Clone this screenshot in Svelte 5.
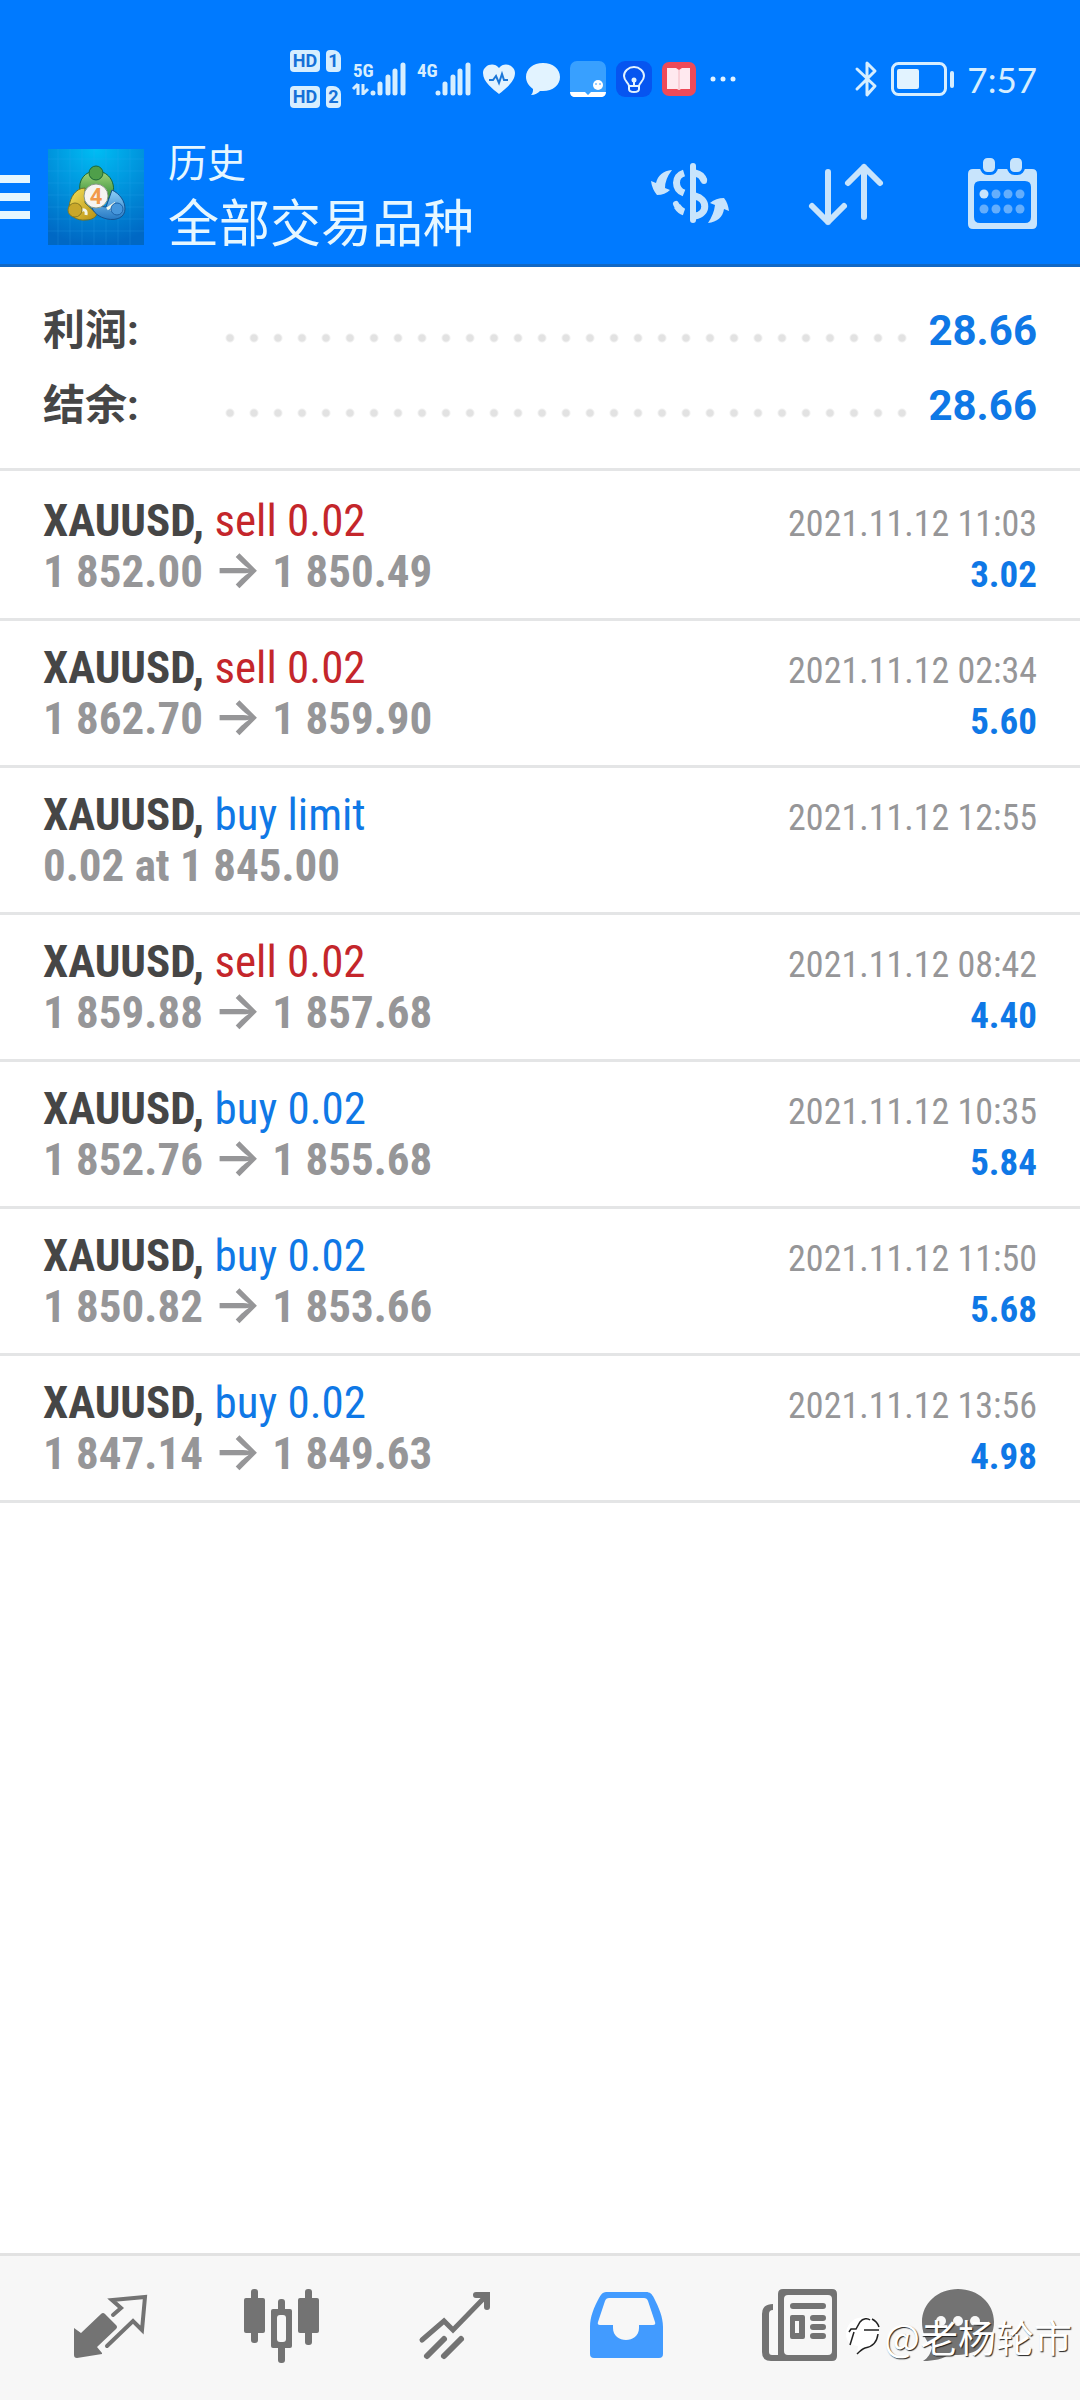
<script>
  const summary = [
    { label: '利润:', value: '28.66' },
    { label: '结余:', value: '28.66' }
  ];

  const deals = [
    { side: 'sell', action: 'sell 0.02', from: '1 852.00', to: '1 850.49', time: '2021.11.12 11:03', profit: '3.02' },
    { side: 'sell', action: 'sell 0.02', from: '1 862.70', to: '1 859.90', time: '2021.11.12 02:34', profit: '5.60' },
    { side: 'buy', action: 'buy limit', note: '0.02 at 1 845.00', time: '2021.11.12 12:55' },
    { side: 'sell', action: 'sell 0.02', from: '1 859.88', to: '1 857.68', time: '2021.11.12 08:42', profit: '4.40' },
    { side: 'buy', action: 'buy 0.02', from: '1 852.76', to: '1 855.68', time: '2021.11.12 10:35', profit: '5.84' },
    { side: 'buy', action: 'buy 0.02', from: '1 850.82', to: '1 853.66', time: '2021.11.12 11:50', profit: '5.68' },
    { side: 'buy', action: 'buy 0.02', from: '1 847.14', to: '1 849.63', time: '2021.11.12 13:56', profit: '4.98' }
  ];

  const tabs = ['quotes', 'charts', 'trade', 'history', 'news', 'messages'];
  let active = $state('history');
</script>

{#snippet bars(x)}
  <g stroke="#d6eeff" stroke-width="5" stroke-linecap="round">
    <path d="M{x} 31v0M{x + 7} 22v9M{x + 15} 15v16M{x + 22} 9v22M{x + 30} 3v28" />
  </g>
{/snippet}

<div class="page">
  <header>
    <div class="status">
      <div class="hd">
        {#each ['1', '2'] as sim}
          <div class="hd-row"><span class="hd-tag">HD</span><span class="sim">{sim}</span></div>
        {/each}
      </div>
      <svg width="55" height="34" viewBox="0 0 55 34" aria-hidden="true">
        <text x="1" y="15">5G</text>
        <path d="M6 22v11M1 27l5-5M11 22v11M11 32l5-5" stroke="#d6eeff" stroke-width="3" fill="none" />
        {@render bars(21)}
      </svg>
      <svg width="55" height="34" viewBox="0 0 55 34" aria-hidden="true">
        <text x="0" y="15">4G</text>
        {@render bars(21)}
      </svg>
      <svg width="34" height="34" viewBox="0 0 34 34" aria-hidden="true">
        <path d="M17 32C11 27 1 20 1 11 1 3 12-1 17 6 22-1 33 3 33 11c0 9-10 16-16 21z" fill="#e2f3ff" />
        <path d="M7 18h4l3-4 3 7 3-9 2 6h4" fill="none" stroke="#1b77d8" stroke-width="2" />
      </svg>
      <svg width="34" height="34" viewBox="0 0 34 34" aria-hidden="true">
        <path d="M17 1c10 0 17 6 17 14s-7 14-17 14h-3c-2 2-5 4-9 4 2-2 2-4 2-6-4-3-7-7-7-12C0 7 7 1 17 1z" fill="#e2f3ff" />
      </svg>
      <svg width="36" height="36" viewBox="0 0 36 36" aria-hidden="true">
        <rect width="36" height="36" rx="7" fill="#38a0ff" />
        <path d="M0 31h15l3 3 3-3h15c0 3-2 5-5 5H5c-3 0-5-2-5-5z" fill="#fff" />
        <circle cx="28" cy="24" r="5" fill="#fff" />
        <path d="M26 22v2M30 22v2" stroke="#38a0ff" />
      </svg>
      <svg width="36" height="36" viewBox="0 0 36 36" aria-hidden="true">
        <rect width="36" height="36" rx="9" fill="#0655f0" />
        <path d="M13 25c0-3-5-5-5-10a10 9 0 0 1 20 0c0 5-5 7-5 10zM13 25v3c0 4 10 4 10 0v-3M18 19v6" fill="none" stroke="#e2f3ff" stroke-width="2" />
        <circle cx="18" cy="19" r="2.5" fill="#e2f3ff" />
      </svg>
      <svg width="34" height="34" viewBox="0 0 34 34" aria-hidden="true">
        <rect width="34" height="34" rx="7" fill="#ee4a58" />
        <path d="M5 6h9l3 2 3-2h8v21h-9l-2 1-2-1H5z" fill="#ffe9ef" />
        <path d="M17 8v19" stroke="#f3b6c0" />
      </svg>
      <svg width="34" height="34" viewBox="0 0 34 34" aria-hidden="true">
        <g fill="#e2f3ff"><circle cx="7" cy="17" r="2.5" /><circle cx="17" cy="17" r="2.5" /><circle cx="27" cy="17" r="2.5" /></g>
      </svg>
      <div class="status-right">
        <svg width="24" height="38" viewBox="0 0 24 38" aria-hidden="true">
          <path d="M2 9l18 17-8 9V3l8 8L2 29" fill="none" stroke="#d6eeff" stroke-width="3" stroke-linejoin="round" stroke-linecap="round" />
        </svg>
        <svg width="64" height="34" viewBox="0 0 64 34" aria-hidden="true">
          <rect x="1.5" y="1.5" width="53" height="31" rx="6" fill="none" stroke="#d6eeff" stroke-width="3" />
          <rect x="6" y="7" width="22" height="20" rx="2" fill="#e2f3ff" />
          <rect x="59" y="9" width="4" height="17" rx="2" fill="#d6eeff" />
        </svg>
        <time>7:57</time>
      </div>
    </div>

    <div class="toolbar">
      <button class="menu" aria-label="菜单"><i></i><i></i><i></i></button>
      <svg class="logo" width="96" height="96" viewBox="0 0 96 96" aria-hidden="true">
        <defs>
          <radialGradient id="sky" cx="50%" cy="0%" r="100%">
            <stop offset="0" stop-color="#00bdf4" />
            <stop offset="1" stop-color="#0068c4" />
          </radialGradient>
          <linearGradient id="green" x2="0" y2="1"><stop stop-color="#a5d67c" /><stop offset="1" stop-color="#2c8a34" /></linearGradient>
          <linearGradient id="yellow" x2="1" y2="1"><stop stop-color="#f4e25a" /><stop offset="1" stop-color="#b98f13" /></linearGradient>
          <linearGradient id="blue" x2="0" y2="1"><stop stop-color="#8fd0f8" /><stop offset="1" stop-color="#2679c4" /></linearGradient>
        </defs>
        <rect width="96" height="96" fill="url(#sky)" />
        <path d="M10 0v96M22 0v96M34 0v96M46 0v96M58 0v96M70 0v96M82 0v96M0 10h96M0 22h96M0 34h96M0 46h96M0 58h96M0 70h96M0 82h96" stroke="#35a9ee" stroke-opacity=".2" />
        <path d="M32 42c-2-11 5-20 16-20s20 9 17 24l-7 5-10-12-11 3z" fill="url(#green)" stroke="#1b6738" />
        <path d="M37 39c-9 0-15 9-16 19-1 9 8 14 17 13 6 0 10-3 11-6L37 54z" fill="url(#yellow)" stroke="#6e7126" />
        <path d="M64 41c8 4 13 11 13 19 0 8-8 12-18 10-8-2-14-6-16-14l15 2z" fill="url(#blue)" stroke="#155290" />
        <path d="M33 62c2-2 6-2 5 4M59 60l6-4-1 6" stroke="#f3f7ea" stroke-width="3" fill="none" />
        <circle cx="48" cy="24" r="7" fill="#4f9f4a" stroke="#1b6738" />
        <circle cx="27" cy="61" r="7" fill="#c9a72a" stroke="#8a7a20" />
        <circle cx="69" cy="60" r="6" fill="#4797dc" stroke="#1c62a8" />
        <circle cx="48" cy="47" r="12" fill="#f6f4f2" stroke="#8a9a8a" />
        <text class="four" x="48" y="55" text-anchor="middle">4</text>
      </svg>
      <div class="titles">
        <div class="section">历史</div>
        <h1>全部交易品种</h1>
      </div>
      <div class="actions">
        <button aria-label="交易品种">
          <svg width="84" height="84" viewBox="0 0 84 84">
            <g fill="none" stroke="#c8e4fc" stroke-width="6">
              <path d="M45 11v54" stroke-linecap="round" />
              <path d="M47 18c5 1 8 4 9 8" stroke-width="7" />
              <path d="M56 25v1" stroke-linecap="round" />
              <path d="M47 41c13 3 13 18 0 20M36 18c-10 3-10 16 0 20M29 51c2 3 4 5 7 6" stroke-width="7" />
              <path d="M28 49l1 2" stroke-linecap="round" />
            </g>
            <path d="M24 15C15 16 10 20 8 28l-5-2q1 8 6 14 8 0 13-5l-5-2q0-9 7-18z" fill="#c8e4fc" />
            <path d="M60 68C69 67 75 62 76 54l5 2q-1-8-5-13-8 0-14 5l5 2q-1 9-7 18z" fill="#c8e4fc" />
          </svg>
        </button>
        <button aria-label="排序">
          <svg width="84" height="84" viewBox="0 0 84 84">
            <path d="M24 17v50M8 51l16 16 16-16M60 62V12M44 28l16-16 16 16" fill="none" stroke="#c8e4fc" stroke-width="6" stroke-linecap="round" stroke-linejoin="round" />
          </svg>
        </button>
        <button aria-label="日期">
          <svg width="84" height="84" viewBox="0 0 84 84">
            <path fill-rule="evenodd" d="M13 14h59q5 0 5 5v50q0 5-5 5H13q-5 0-5-5V19q0-5 5-5zM20 26q-6 0-6 6v30q0 6 6 6h45q6 0 6-6V32q0-6-6-6z" fill="#c8e4fc" />
            <g fill="#c8e4fc" stroke="#007aff" stroke-width="3">
              <rect x="21.5" y="1.5" width="15" height="17" rx="6" />
              <rect x="48.5" y="1.5" width="15" height="17" rx="6" />
            </g>
            {#each [39, 54] as cy, row}
              {#each [24, 36, 48, 60] as cx, col}
                <circle {cx} {cy} r="4.5" fill={row + col === 0 ? '#c8e4fc' : '#64aefc'} />
              {/each}
            {/each}
          </svg>
        </button>
      </div>
    </div>
  </header>

  <dl class="summary">
    {#each summary as item}
      <div class="total">
        <dt>{item.label}</dt>
        <dd class="dots" aria-hidden="true"></dd>
        <dd class="value">{item.value}</dd>
      </div>
    {/each}
  </dl>

  <ul class="deals">
    {#each deals as deal}
      <li>
        <div class="line">
          <span class="symbol">XAUUSD, <span class={deal.side}>{deal.action}</span></span>
          <span class="date">{deal.time}</span>
        </div>
        <div class="line">
          <span class="price">
            {#if deal.note}{deal.note}{:else}{deal.from} <span class="arrow">→</span> {deal.to}{/if}
          </span>
          {#if deal.profit}<span class="profit">{deal.profit}</span>{/if}
        </div>
      </li>
    {/each}
  </ul>

  <nav>
    {#each tabs as tab}
      <button class:active={active === tab} aria-label={tab} onclick={() => (active = tab)}>
        <svg width="96" height="96" viewBox="0 0 96 96">
          {#if tab === 'quotes'}
            <path d="M12 48l7 5 20-19q2-2 4 0l11 11q2 2 0 4L35 67l5 6v1l-25 4q-3 0-3-3z" fill="currentColor" />
            <path d="M51 35l8-7-9-8 33-3-3 33-9-9-26 25" fill="none" stroke="currentColor" stroke-width="4" stroke-linecap="round" />
          {:else if tab === 'charts'}
            <g fill="currentColor">
              <rect x="10" y="18" width="21" height="35" rx="2" />
              <rect x="17" y="9" width="7" height="54" rx="3" />
              <rect x="64" y="18" width="21" height="35" rx="2" />
              <rect x="71" y="9" width="7" height="56" rx="3" />
              <rect x="44" y="19" width="7" height="64" rx="3" />
              <rect x="37" y="29" width="21" height="39" rx="2" />
            </g>
            <rect x="43" y="35" width="9" height="27" rx="3" fill="#f7f7f7" />
          {:else if tab === 'trade'}
            <path d="M15 60l22-19 9 9 33-34" fill="none" stroke="currentColor" stroke-width="5" stroke-linecap="round" />
            <path d="M69 15h11v12M20 76l17-17M37 76l17-17" fill="none" stroke="currentColor" stroke-width="6" stroke-linecap="round" />
          {:else if tab === 'history'}
            <path fill-rule="evenodd" d="M27 12h40c4 0 6 2 8 6 5 10 9 19 9 29v27q0 4-4 4H15q-4 0-4-4V47c0-10 4-20 9-29 2-4 4-6 7-6zM30 18q-3 0-4 3L19 42q-1 3 2 3h13v3c0 16 26 16 26 0v-3h14q3 0 2-3l-7-21q-1-3-4-3z" fill="currentColor" />
          {:else if tab === 'news'}
            <path fill-rule="evenodd" d="M31 9h49q5 0 5 5v62q0 5-5 5H19q-9 0-9-9V34q0-10 11-10v6q-4 0-4 4v38q0 3 3 3h6V14q0-5 5-5zM36 15q-4 0-4 4v52q0 4 4 4h40q4 0 4-4V19q0-4-4-4z" fill="currentColor" />
            <path d="M41 26h30M61 38h10M61 47h10M61 56h10" stroke="currentColor" stroke-width="6" stroke-linecap="round" />
            <path fill-rule="evenodd" d="M40 35h11q2 0 2 2v20q0 2-2 2H40q-2 0-2-2V37q0-2 2-2zM43 41v12h4V41z" fill="currentColor" />
          {:else}
            <path d="M34 9c20 0 36 14 36 33S54 75 34 75c-3 0-5 0-8-1-7 5-16 7-27 7 5-3 8-8 9-14C1 61-2 51-2 42-2 23 14 9 34 9z" fill="currentColor" />
            <g fill="#f7f7f7"><circle cx="17" cy="41" r="5" /><circle cx="34" cy="41" r="5" /><circle cx="51" cy="41" r="5" /></g>
          {/if}
        </svg>
      </button>
    {/each}
    <div class="watermark">
      <svg width="36" height="44" viewBox="0 0 36 44" aria-hidden="true">
        <path d="M0 18C2 8 9 3 19 3c10 0 14 6 14 14 0 9-6 15-13 17-4 1-7 3-9 5l1-7C4 31-1 26 0 18z" fill="#fff" />
        <path d="M3 18l2-3h5l4-7c3-4 8-4 10-2M8 18L4 31M18 16h15M32 20c-1 8-6 13-13 14-3 1-6 4-8 6M26 5c4 2 6 5 7 8" fill="none" stroke="#222" stroke-width="1.5" />
      </svg>
      <span>@老杨轮市</span>
    </div>
  </nav>
</div>

<style>
  :global(body) {
    margin: 0;
    background: #fff;
  }

  .page {
    display: flex;
    flex-direction: column;
    min-height: 100vh;
    font-family: Roboto, "Noto Sans CJK SC", sans-serif;
  }

  svg {
    display: block;
    flex: none;
    overflow: visible;
  }

  button {
    padding: 0;
    border: 0;
    background: none;
    color: inherit;
    cursor: pointer;
  }

  header {
    background: #007aff;
    border-bottom: 3px solid #1268c4;
    color: #e6f7ff;
  }

  .status {
    display: flex;
    align-items: center;
    gap: 10px;
    height: 66px;
    padding: 46px 43px 18px 290px;
  }

  .status text {
    font: bold 19px "Roboto Condensed", Roboto, sans-serif;
    fill: #d6eeff;
  }

  .hd {
    display: flex;
    flex-direction: column;
    gap: 14px;
    width: 52px;
  }

  .hd-row {
    display: flex;
    gap: 6px;
    font: bold 18px/22px Roboto, sans-serif;
    color: #1470d8;
    text-align: center;
  }

  .hd-tag,
  .sim {
    background: #d6eeff;
    border-radius: 4px;
  }

  .hd-tag {
    width: 30px;
  }

  .sim {
    width: 15px;
    border-top-right-radius: 8px;
  }

  .status-right {
    display: flex;
    align-items: center;
    gap: 12px;
    margin-left: auto;
  }

  time {
    font: 35px/44px Lato, sans-serif;
    color: #d6eeff;
  }

  .toolbar {
    display: flex;
    align-items: center;
    height: 134px;
    padding-right: 36px;
  }

  .menu {
    display: flex;
    flex-direction: column;
    gap: 10px;
    width: 30px;
    margin-right: 18px;
  }

  .menu i {
    width: 100%;
    height: 8px;
    background: #e6f7ff;
  }

  .four {
    font: bold 22px Roboto, sans-serif;
    fill: #f29a4a;
  }

  .titles {
    flex: 1;
    margin-left: 24px;
    white-space: nowrap;
  }

  .section {
    font-size: 39px;
    line-height: 56px;
  }

  h1 {
    margin: 0;
    font-size: 51px;
    line-height: 66px;
    font-weight: 400;
  }

  .actions {
    display: flex;
    gap: 72px;
  }

  .summary {
    margin: 0;
    padding: 26px 43px 25px;
    border-bottom: 3px solid #e4e5e6;
  }

  .total {
    display: flex;
    align-items: center;
    height: 75px;
    font-size: 42px;
    line-height: 48px;
    font-weight: 700;
  }

  dt {
    width: 175px;
    color: #464646;
  }

  dd {
    margin: 0;
  }

  .dots {
    flex: 1;
    align-self: flex-end;
    height: 24px;
    margin: 0 15px 18px 0;
    background: radial-gradient(circle, #e2e2e2 3px, transparent 5px) 0 0 / 24px 24px repeat-x;
  }

  .value,
  .buy,
  .profit {
    color: #0f78e6;
  }

  .deals {
    flex: 1;
    margin: 0;
    padding: 3px 0 0;
    list-style: none;
    font-family: "Roboto Condensed", "Liberation Sans Narrow", Roboto, sans-serif;
  }

  li {
    padding: 21px 43px;
    border-bottom: 3px solid #e4e5e6;
  }

  .line {
    display: flex;
    justify-content: space-between;
    align-items: baseline;
    height: 51px;
    font-size: 45px;
    line-height: 51px;
    white-space: nowrap;
  }

  .symbol {
    font-weight: 700;
    color: #464646;
  }

  .symbol span {
    font-weight: 400;
  }

  .symbol .buy {
    color: #0f78e6;
  }

  .symbol .sell {
    color: #c4262b;
  }

  .price {
    font-weight: 700;
    color: #969698;
  }

  .arrow {
    font-family: Inter, sans-serif;
    font-size: 51px;
    font-weight: 600;
    line-height: 0;
  }

  .date {
    font-size: 36px;
    color: #969698;
  }

  .profit {
    font-size: 37px;
    font-weight: 700;
  }

  nav {
    position: relative;
    display: flex;
    justify-content: space-between;
    align-items: center;
    height: 144px;
    padding: 0 60px 0 62px;
    border-top: 3px solid #e2e2e2;
    background: #f7f7f7;
    color: #737373;
  }

  .active {
    color: #429bff;
  }

  .watermark {
    position: absolute;
    right: 8px;
    bottom: 38px;
    display: flex;
    align-items: center;
    gap: 2px;
    font: 38px/52px "Noto Sans CJK SC", sans-serif;
    color: #fff;
    text-shadow: 1px 1px 1px #222;
  }
</style>
